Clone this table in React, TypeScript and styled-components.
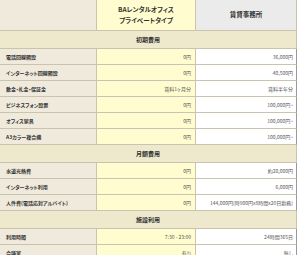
import React from "react";
import styled, { createGlobalStyle } from "styled-components";

const GlobalStyle = createGlobalStyle`
  body {
    margin: 0;
    background: #fff;
    font-family: "Noto Sans CJK JP", "Noto Sans", sans-serif;
    font-feature-settings: "palt";
  }
`;

const Table = styled.table`
  width: 297px;
  border-collapse: separate;
  border-spacing: 0;
  table-layout: fixed;
  color: #333;
`;

const Cell = styled.td`
  box-sizing: border-box;
  border-right: 1px solid #c9c3b0;
  border-bottom: 1px solid #c9c3b0;
  padding: 0 4px;
  height: 16px;
  font-size: 5px;
  line-height: 1.2;
  white-space: nowrap;
`;

const HeadCell = styled(Cell).attrs({ as: "th" })<{ $tone: "label" | "plan" | "rent"; $w: number }>`
  width: ${(p) => p.$w}px;
  height: 31px;
  font-size: 6.5px;
  line-height: 1.7;
  font-weight: bold;
  text-align: center;
  background: ${(p) =>
    p.$tone === "label" ? "#efeadb" : p.$tone === "plan" ? "#fffdcf" : "#ebebeb"};
`;

const SectionCell = styled(Cell)`
  height: 18px;
  background: #eee8cc;
  font-size: 6px;
  font-weight: bold;
  text-align: center;
`;

const LabelCell = styled(Cell)`
  background: #efeadb;
  font-weight: bold;
  padding-left: 6px;
`;

const PlanCell = styled(Cell)`
  background: #fffdcf;
  text-align: right;
  color: #555;
`;

const RentCell = styled(Cell)`
  background: #fff;
  text-align: right;
  color: #555;
  padding-right: 3px;
  border-right-color: #999;
`;

type Row = [string, string, string];

const sections: { title: string; rows: Row[] }[] = [
  {
    title: "初期費用",
    rows: [
      ["電話回線開設", "0円", "36,000円"],
      ["インターネット回線開設", "0円", "40,500円"],
      ["敷金・礼金・保証金", "賃料1ヶ月分", "賃料半年分"],
      ["ビジネスフォン設置", "0円", "100,000円~"],
      ["オフィス家具", "0円", "100,000円~"],
      ["A3カラー複合機", "0円", "100,000円~"],
    ],
  },
  {
    title: "月額費用",
    rows: [
      ["水道光熱費", "0円", "約20,000円"],
      ["インターネット利用", "0円", "6,000円"],
      ["人件費(電話応対アルバイト)", "0円", "144,000円(時900円x8時間x20日勤務)"],
    ],
  },
  {
    title: "施設利用",
    rows: [
      ["利用時間", "7:30 - 23:00", "24時間365日"],
      ["会議室", "有り", "無し"],
    ],
  },
];

export default function App() {
  return (
    <>
      <GlobalStyle />
      <Table>
        <thead>
          <tr>
            <HeadCell $tone="label" $w={97} />
            <HeadCell $tone="plan" $w={99}>
              BAレンタルオフィス
              <br />
              プライベートタイプ
            </HeadCell>
            <HeadCell $tone="rent" $w={101}>
              賃貸事務所
            </HeadCell>
          </tr>
        </thead>
        <tbody>
          {sections.map((s) => (
            <React.Fragment key={s.title}>
              <tr>
                <SectionCell colSpan={3}>{s.title}</SectionCell>
              </tr>
              {s.rows.map(([label, plan, rent]) => (
                <tr key={label}>
                  <LabelCell>{label}</LabelCell>
                  <PlanCell>{plan}</PlanCell>
                  <RentCell>{rent}</RentCell>
                </tr>
              ))}
            </React.Fragment>
          ))}
        </tbody>
      </Table>
    </>
  );
}
